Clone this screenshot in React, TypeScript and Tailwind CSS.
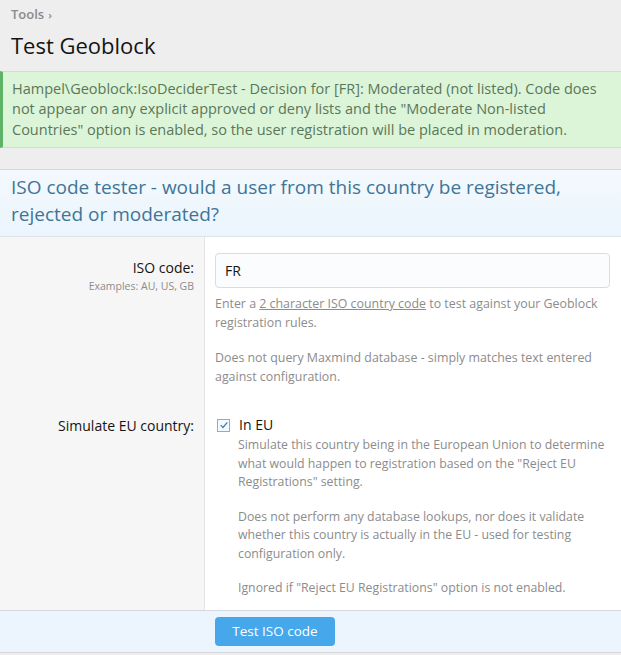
import { useState } from 'react';

const font = { fontFamily: '"Open Sans", "Noto Sans", sans-serif' };

export default function App() {
  const [iso, setIso] = useState('FR');
  const [inEu, setInEu] = useState(true);

  return (
    <div className="min-h-[655px] bg-[#eeeeee] text-[#141414]" style={font}>
      <div className="px-[11px] pt-[5px]">
        <div className="flex items-center gap-1 text-[13px] font-semibold text-[#8a8a8a]">
          <span>Tools</span>
          <span className="text-[11px]">›</span>
        </div>
        <h1 className="mt-[6px] text-[22px] leading-[28px] text-[#141414]">Test Geoblock</h1>
      </div>

      <div className="mt-[12px] border-y border-[#cfdfcb] border-l-[3px] border-l-[#5fb366] bg-[#dcf5d8] px-[9px] py-[7px] text-[14.5px] leading-[20.5px] text-[#5b7759]">
        Hampel\Geoblock:IsoDeciderTest - Decision for [FR]: Moderated (not listed). Code does not appear on any explicit
        approved or deny lists and the "Moderate Non-listed Countries" option is enabled, so the user registration will be
        placed in moderation.
      </div>

      <form className="mt-[21px] border-y border-[#d8d8d8] bg-white" onSubmit={(e) => e.preventDefault()}>
        <h2 className="border-b border-[#dfe3e6] bg-gradient-to-b from-[#f3f9fe] to-[#ebf5fd] px-[11px] pb-[8px] pt-[4px] text-[19px] leading-[27px] text-[#3f7597]">
          ISO code tester - would a user from this country be registered, rejected or moderated?
        </h2>

        <div className="grid grid-cols-[205px_1fr]">
          <div className="border-r border-[#e4e4e4] bg-[#f6f6f6] pr-[10px] pt-[21px] text-right">
            <div className="text-[14px] leading-[20px]">ISO code:</div>
            <div className="text-[10.5px] leading-[16px] text-[#8c8c8c]">Examples: AU, US, GB</div>
          </div>
          <div className="pl-[10px] pr-[11px] pb-[18px] pt-[16px]">
            <input
              value={iso}
              onChange={(e) => setIso(e.target.value)}
              className="h-[35px] w-full rounded-[4px] border border-[#d8dde1] bg-[#fbfcfd] px-[9px] text-[14px] outline-none"
            />
            <div className="mt-[6px] text-[12.4px] leading-[19px] text-[#8c8c8c]">
              <p>
                Enter a <u>2 character ISO country code</u> to test against your Geoblock registration rules.
              </p>
              <p className="mt-[16px]">Does not query Maxmind database - simply matches text entered against configuration.</p>
            </div>
          </div>

          <div className="border-r border-[#e4e4e4] bg-[#f6f6f6] pr-[10px] pt-[12px] text-right">
            <div className="text-[14px] leading-[20px]">Simulate EU country:</div>
          </div>
          <div className="pl-[12px] pr-[10px] pb-[12px] pt-[11px]">
            <label className="flex cursor-pointer items-center gap-[9px]">
              <button
                type="button"
                onClick={() => setInEu(!inEu)}
                className="flex h-[13px] w-[13px] items-center justify-center border border-[#7fb0d8] bg-[#f4f9fd]"
              >
                {inEu && (
                  <svg viewBox="0 0 12 12" className="h-[10px] w-[10px]">
                    <path d="M2 6.2 L4.8 9 L10 2.8" fill="none" stroke="#3d7fb8" strokeWidth="1.5" />
                  </svg>
                )}
              </button>
              <span className="text-[14px] leading-[20px]">In EU</span>
            </label>
            <div className="ml-[21px] mt-[1px] text-[12.3px] leading-[18.5px] text-[#8c8c8c]">
              <p>
                Simulate this country being in the European Union to determine what would happen to registration based on
                the "Reject EU Registrations" setting.
              </p>
              <p className="mt-[16px]">
                Does not perform any database lookups, nor does it validate whether this country is actually in the EU -
                used for testing configuration only.
              </p>
              <p className="mt-[16px]">Ignored if "Reject EU Registrations" option is not enabled.</p>
            </div>
          </div>
        </div>

        <div className="border-t border-[#d4d8dc] bg-[#ecf5fe] py-[6px] pl-[215px]">
          <button type="submit" className="h-[29px] w-[120px] rounded-[4px] bg-[#47a7eb] text-[13.5px] text-white">
            Test ISO code
          </button>
        </div>
      </form>
    </div>
  );
}
